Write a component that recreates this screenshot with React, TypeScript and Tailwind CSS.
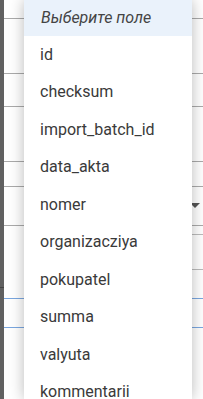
import React from 'react';

const fields = [
  'id',
  'checksum',
  'import_batch_id',
  'data_akta',
  'nomer',
  'organizacziya',
  'pokupatel',
  'summa',
  'valyuta',
  'kommentarii',
];

export default function App() {
  return (
    <div className="relative flex h-[399px] w-full overflow-hidden bg-white font-['Roboto',sans-serif]">
      {/* overlay edge on the left */}
      <div className="flex w-[4px] shrink-0 flex-col bg-[#616161]">
        <div className="h-[287px]"></div>
        <div className="h-[1px] bg-[#444]"></div>
      </div>

      {/* form underneath */}
      <div className="flex flex-1 flex-col bg-white">
        <div className="h-[19px] border-b border-[#aaa]"></div>
        <div className="h-[55px] border-b border-[#aaa]"></div>
        <div className="h-[33px] border-b border-[#aaa]"></div>
        <div className="h-[55px] border-b border-[#aaa]"></div>
        <div className="h-[25px] border-b border-[#aaa]"></div>
        <div className="flex h-[39px] items-center justify-end border-b border-[#aaa] pr-[3px]">
          <span className="mb-[2px] border-x-[5px] border-t-[5px] border-x-transparent border-t-[#555]"></span>
        </div>
        <div className="ml-auto mr-[-10px] mt-[8px] h-[36px] w-[30px] rounded-[8px] border border-[#bbb]"></div>
        <div className="mt-[28px] h-[1px] bg-[#7aa7e0]"></div>
        <div className="mt-[28px] h-[1px] bg-[#7aa7e0]"></div>
      </div>

      {/* dropdown list */}
      <div className="absolute left-[24px] top-0 h-full w-[168px] bg-white shadow-[0_0_14px_rgba(0,0,0,0.28)]">
        <div className="flex h-[36px] items-center bg-[#eaf2fb] pl-[17px] text-[16px] italic text-[#444]">
          Выберите поле
        </div>
        {fields.map((f) => (
          <div key={f} className="flex h-[37.5px] items-center pl-[16px] text-[16px] text-[#3a3a3a]">
            {f}
          </div>
        ))}
      </div>
    </div>
  );
}
